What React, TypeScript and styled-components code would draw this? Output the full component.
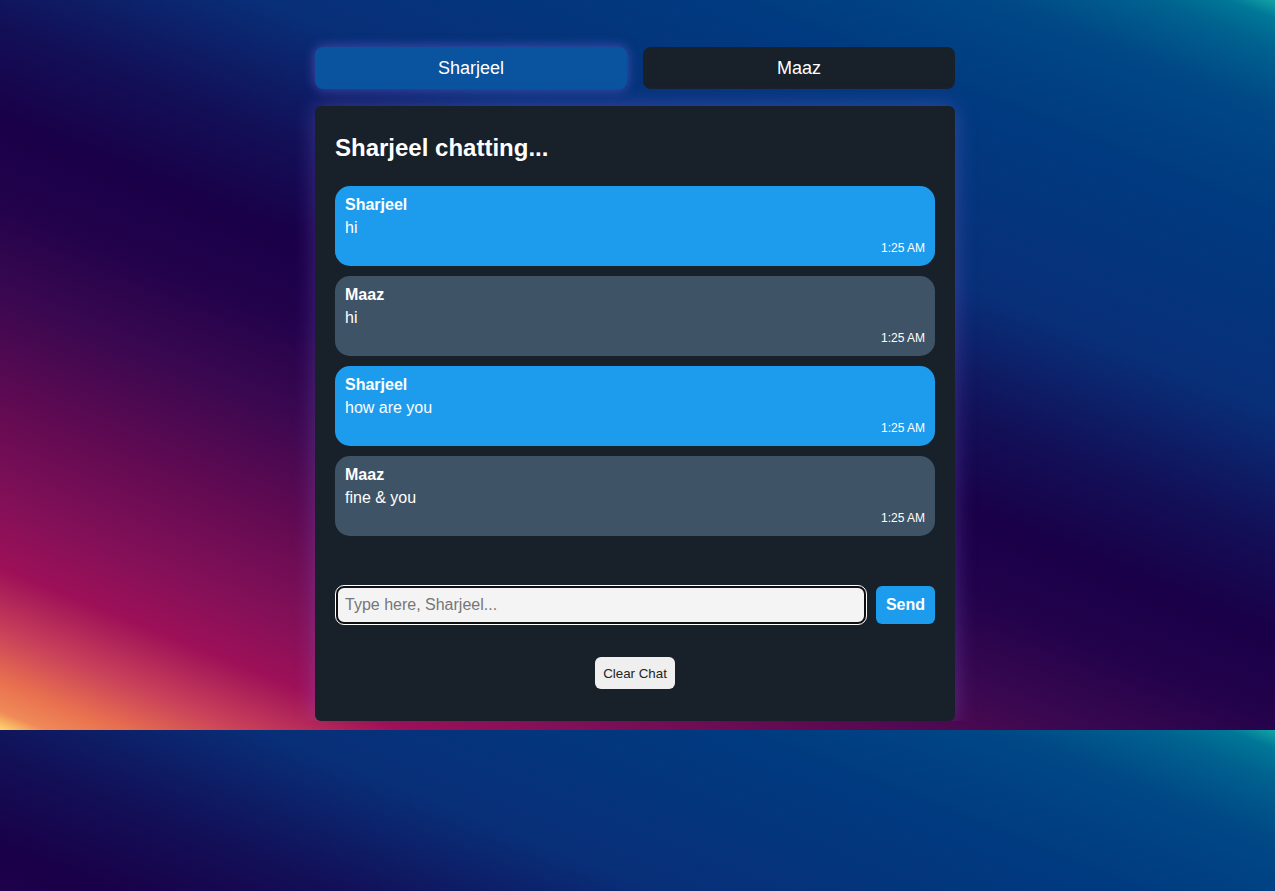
import React from "react";
import styled, { createGlobalStyle } from "styled-components";

const GlobalStyle = createGlobalStyle`
  html {
    background: linear-gradient(
      22deg,
      #fdd86c 0%,
      #f08a58 1.5%,
      #e8704f 4%,
      #c8405a 8%,
      #9e1058 13%,
      #821058 18.5%,
      #600a52 26.5%,
      #3a0850 35%,
      #21024b 43%,
      #1a0048 49%,
      #121058 57%,
      #082f78 67%,
      #003a80 82%,
      #004886 91%,
      #00628f 96%,
      #007898 98.5%,
      #14a4a4 100%
    );
    background-size: 100% 730px;
    background-repeat: repeat;
  }
  body {
    margin: 0;
    font-family: "Liberation Sans", Arial, sans-serif;
    color: #fff;
  }
  * { box-sizing: border-box; }
`;

const Page = styled.div`
  display: flex;
  justify-content: center;
  padding: 47px 5px 0 0;
`;

const Column = styled.div`
  width: 640px;
  display: flex;
  flex-direction: column;
`;

const Tabs = styled.div`
  display: grid;
  grid-template-columns: 1fr 1fr;
  gap: 16px;
  margin-bottom: 17px;
`;

const Tab = styled.button<{ $active?: boolean }>`
  height: 42px;
  border: none;
  border-radius: 8px;
  font-family: "Liberation Sans", Arial, sans-serif;
  font-size: 18px;
  color: #fff;
  background: ${(p) => (p.$active ? "#0a539e" : "#18202a")};
  box-shadow: ${(p) => (p.$active ? "0 0 12px rgba(120, 110, 230, 0.55)" : "none")};
  cursor: pointer;
`;

const Card = styled.div`
  background: #18202a;
  border-radius: 6px;
  padding: 20px 20px 32px;
  box-shadow: 0 0 22px rgba(160, 130, 255, 0.3);
`;

const Title = styled.h2`
  margin: 8px 0 24px;
  font-size: 24px;
  line-height: 28px;
  font-weight: bold;
`;

const MessageList = styled.div`
  display: flex;
  flex-direction: column;
  gap: 10px;
  height: 380px;
  margin-bottom: 20px;
  overflow-y: auto;
`;

const Bubble = styled.div<{ $mine?: boolean }>`
  background: ${(p) => (p.$mine ? "#1d9bed" : "#3e5366")};
  border-radius: 15px;
  padding: 10px 10px 11px;
  display: flex;
  flex-direction: column;
`;

const Sender = styled.div`
  font-weight: bold;
  font-size: 16px;
  line-height: 18px;
`;

const Text = styled.div`
  font-size: 16px;
  line-height: 18px;
  margin-top: 5px;
`;

const Time = styled.div`
  font-size: 12px;
  line-height: 14px;
  margin-top: 4px;
  text-align: right;
`;

const InputRow = styled.div`
  display: flex;
  gap: 10px;
  padding-left: 1px;
`;

const Input = styled.input`
  flex: 1;
  height: 38px;
  border: 2px solid #101010;
  outline: 1px solid #ffffff;
  border-radius: 8px;
  background: #f4f4f4;
  padding: 0 7px;
  font-family: "Liberation Sans", Arial, sans-serif;
  font-size: 16px;
  color: #111;
  &::placeholder {
    color: #767676;
  }
`;

const SendButton = styled.button`
  height: 38px;
  padding: 0 10px;
  border: none;
  border-radius: 6px;
  background: #1d9bed;
  color: #fff;
  font-family: "Liberation Sans", Arial, sans-serif;
  font-weight: bold;
  font-size: 16px;
  cursor: pointer;
`;

const Footer = styled.div`
  display: flex;
  justify-content: center;
  margin-top: 33px;
`;

const ClearButton = styled.button`
  height: 32px;
  padding: 0 8px;
  border: none;
  border-radius: 6px;
  background: #efefef;
  color: #222;
  font-family: "Liberation Sans", Arial, sans-serif;
  font-size: 13.33px;
  cursor: pointer;
`;

const messages = [
  { from: "Sharjeel", text: "hi", time: "1:25 AM" },
  { from: "Maaz", text: "hi", time: "1:25 AM" },
  { from: "Sharjeel", text: "how are you", time: "1:25 AM" },
  { from: "Maaz", text: "fine & you", time: "1:25 AM" },
];

export default function App() {
  return (
    <>
      <GlobalStyle />
      <Page>
        <Column>
          <Tabs>
            <Tab $active>Sharjeel</Tab>
            <Tab>Maaz</Tab>
          </Tabs>
          <Card>
            <Title>Sharjeel chatting...</Title>
            <MessageList>
              {messages.map((m, i) => (
                <Bubble key={i} $mine={m.from === "Sharjeel"}>
                  <Sender>{m.from}</Sender>
                  <Text>{m.text}</Text>
                  <Time>{m.time}</Time>
                </Bubble>
              ))}
            </MessageList>
            <InputRow>
              <Input placeholder="Type here, Sharjeel..." />
              <SendButton>Send</SendButton>
            </InputRow>
            <Footer>
              <ClearButton>Clear Chat</ClearButton>
            </Footer>
          </Card>
        </Column>
      </Page>
    </>
  );
}
